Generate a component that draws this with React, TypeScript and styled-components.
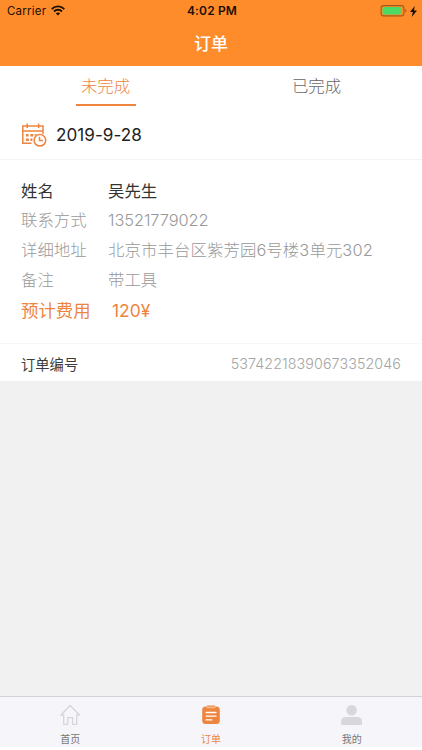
import React from 'react';
import styled, { createGlobalStyle } from 'styled-components';

const GlobalStyle = createGlobalStyle`
  * { box-sizing: border-box; }
  body {
    margin: 0;
    background: #fff;
    font-family: Inter, "Noto Sans CJK SC", sans-serif;
  }
`;

const Screen = styled.div`
  width: 422px;
  height: 750px;
  padding-bottom: 3px;
  display: flex;
  flex-direction: column;
  background: #fff;
  overflow: hidden;
`;

const Header = styled.header`
  height: 66px;
  background: #ff8c2b;
`;

const StatusBar = styled.div`
  height: 22px;
  padding: 0 5px 0 7px;
  display: grid;
  grid-template-columns: 1fr auto 1fr;
  align-items: center;
  font-size: 11.5px;
  line-height: 22px;
  color: #1d0f04;
`;

const Carrier = styled.div`
  display: flex;
  align-items: center;
  gap: 5px;
  letter-spacing: 0.22px;
  svg { margin-bottom: 1px; }
`;

const Clock = styled.div`
  font-weight: 600;
  font-size: 12px;
  letter-spacing: 0.15px;
`;

const Power = styled.div`
  display: flex;
  justify-content: flex-end;
  align-items: center;
  gap: 3px;
`;

const Title = styled.h1`
  margin: 0;
  height: 44px;
  line-height: 44px;
  text-align: center;
  font-size: 17px;
  font-weight: 500;
  color: #fff;
`;

const Tabs = styled.nav`
  height: 45px;
  display: flex;
`;

const Tab = styled.div<{ $active?: boolean }>`
  flex: 1;
  display: flex;
  flex-direction: column;
  align-items: center;
  font-size: 16.4px;
  font-weight: 300;
  color: ${(p) => (p.$active ? '#ee853f' : '#666')};
  line-height: 36px;
  padding-top: 2px;
  &::after {
    content: '';
    width: 60px;
    height: 2px;
    background: ${(p) => (p.$active ? '#ee853f' : 'transparent')};
  }
`;

const DateRow = styled.div`
  height: 49px;
  padding-left: 21px;
  display: flex;
  align-items: center;
  gap: 9px;
  border-bottom: 1px solid #f4f4f4;
  font-size: 17.1px;
  line-height: 20px;
  color: #222;
`;

const Details = styled.section`
  height: 184px;
  padding: 16px 21px 0;
  border-bottom: 1px solid #f7f7f7;
`;

const Field = styled.div<{ $tone: 'dark' | 'muted' | 'price' }>`
  display: flex;
  height: 30px;
  line-height: ${(p) => (p.$tone === 'muted' ? 28 : 30)}px;
  font-size: ${(p) => (p.$tone === 'price' ? 17.4 : 16.4)}px;
  font-weight: ${(p) => (p.$tone === 'muted' ? 300 : 400)};
  color: ${(p) => ({ dark: '#333', muted: '#999', price: '#ee853f' })[p.$tone]};
`;

const Label = styled.span<{ $wide?: boolean }>`
  width: ${(p) => (p.$wide ? 91 : 87)}px;
`;

const Value = styled.span<{ $spacing?: number }>`
  letter-spacing: ${(p) => p.$spacing ?? 0}px;
  white-space: nowrap;
`;

const OrderRow = styled.div`
  height: 37px;
  padding: 1px 21px 0;
  display: flex;
  justify-content: space-between;
  align-items: center;
  font-size: 14.3px;
  color: #3c3c3c;
`;

const OrderNumber = styled.span`
  font-weight: 300;
  letter-spacing: 0.08px;
  color: #a5a5a5;
`;

const Blank = styled.main`
  flex: 1;
  background: #f1f1f1;
`;

const TabBar = styled.footer`
  height: 51px;
  display: flex;
  background: #f5f5fa;
  border-top: 1px solid #d3d3d6;
`;

const BarItem = styled.div<{ $active?: boolean }>`
  flex: 1;
  display: flex;
  flex-direction: column;
  align-items: center;
  padding-top: 6px;
  font-size: 10px;
  line-height: 15px;
  color: ${(p) => (p.$active ? '#ee853f' : '#777')};
  svg { margin-bottom: 5px; }
`;

const WifiIcon = () => (
  <svg width="14" height="11" viewBox="0 0 14 11" fill="none" stroke="#1d0f04" strokeWidth="1.9">
    <path d="M0.7 4.1C4.3.4 9.7.4 13.3 4.1M3 6.5c2.3-2.3 5.7-2.3 8 0" />
    <path d="M4.8 8.3c1.3-1.2 3.1-1.2 4.4 0L7 10.5z" fill="#1d0f04" stroke="none" />
  </svg>
);

const BatteryIcon = () => (
  <svg width="27" height="12" viewBox="0 0 27 12">
    <rect x="1.1" y=".6" width="22.8" height="10.3" rx="2.4" fill="none" stroke="#a3591c" strokeWidth="1.1" />
    <rect x="2.5" y="2" width="18.3" height="7.5" rx="1" fill="#4cd964" />
    <path d="M25.2 4.1c1.7.5 1.7 2.8 0 3.3z" fill="#a3591c" />
  </svg>
);

const BoltIcon = () => (
  <svg width="7" height="11" viewBox="0 0 7 11" fill="#1d0f04">
    <path d="M4.7 0 0 6h2.8L1.8 11 7 4.6H4z" />
  </svg>
);

const CalendarIcon = () => (
  <svg width="26" height="25" viewBox="0 0 26 25" fill="none" stroke="#ee853f" strokeWidth="1.5">
    <path d="M10.5 20.3H1.8V2.9H22v8M1.8 8.1H22M6.2.5V5M17.6.5V5" />
    <circle cx="18.9" cy="17.3" r="5.8" />
    <path d="M18.5 13.7v3.9h3.4" />
    <path d="M9.4 10.9h2.9v2.6H9.4zM5 15.4h2.9v2.6H5zM9.4 15.4h2v2.6h-2zM13.6 10.9h2v1.6h-2zM5 11.1h2.6v2.4H5z" fill="#ee853f" stroke="none" />
  </svg>
);

const HomeIcon = () => (
  <svg width="22" height="24" viewBox="0 0 22 24" fill="none" stroke="#d6d6da" strokeWidth="1.3" strokeLinejoin="round">
    <path d="M1.9 12 11.2 2.5l9.3 9.5h-2.8v9.3h-4.1v-6.6H8.8v6.6H4.7V12z" />
  </svg>
);

const OrderIcon = () => (
  <svg width="22" height="24" viewBox="0 0 22 24" fill="none">
    <rect x="2.2" y="3.4" width="17.6" height="17.6" rx="3.5" fill="#ee853f" />
    <path d="M6.4 3.2h9.2v1.1a1 1 0 0 1-1 1H7.4a1 1 0 0 1-1-1z" fill="#f6b88e" />
    <path d="M7 3h8" stroke="#ee853f" strokeWidth="1" />
    <path d="M6.2 9.5h9.8M6.2 13.2h9.8M6.2 16.9h5.6" stroke="#fff" strokeWidth="1.3" strokeLinecap="round" />
  </svg>
);

const UserIcon = () => (
  <svg width="22" height="24" viewBox="0 0 22 24" fill="#d8d8da">
    <circle cx="10.6" cy="7.2" r="5.2" />
    <path d="M.2 22v-3.5c0-3 1.8-4.6 4.6-4.6h11.6c2.8 0 4.6 1.6 4.6 4.6V22z" />
  </svg>
);

export default function App() {
  return (
    <>
      <GlobalStyle />
      <Screen>
        <Header>
          <StatusBar>
            <Carrier>Carrier <WifiIcon /></Carrier>
            <Clock>4:02 PM</Clock>
            <Power><BatteryIcon /><BoltIcon /></Power>
          </StatusBar>
          <Title>订单</Title>
        </Header>
        <Tabs>
          <Tab $active>未完成</Tab>
          <Tab>已完成</Tab>
        </Tabs>
        <DateRow>
          <CalendarIcon />
          <Value $spacing={0.05}>2019-9-28</Value>
        </DateRow>
        <Details>
          <Field $tone="dark"><Label>姓名</Label><Value>吴先生</Value></Field>
          <Field $tone="muted"><Label>联系方式</Label><Value $spacing={-0.06}>13521779022</Value></Field>
          <Field $tone="muted"><Label>详细地址</Label><Value $spacing={0.1}>北京市丰台区紫芳园6号楼3单元302</Value></Field>
          <Field $tone="muted"><Label>备注</Label><Value>带工具</Value></Field>
          <Field $tone="price"><Label $wide>预计费用</Label><Value>120¥</Value></Field>
        </Details>
        <OrderRow>
          <span>订单编号</span>
          <OrderNumber>53742218390673352046</OrderNumber>
        </OrderRow>
        <Blank />
        <TabBar>
          <BarItem><HomeIcon />首页</BarItem>
          <BarItem $active><OrderIcon />订单</BarItem>
          <BarItem><UserIcon />我的</BarItem>
        </TabBar>
      </Screen>
    </>
  );
}
